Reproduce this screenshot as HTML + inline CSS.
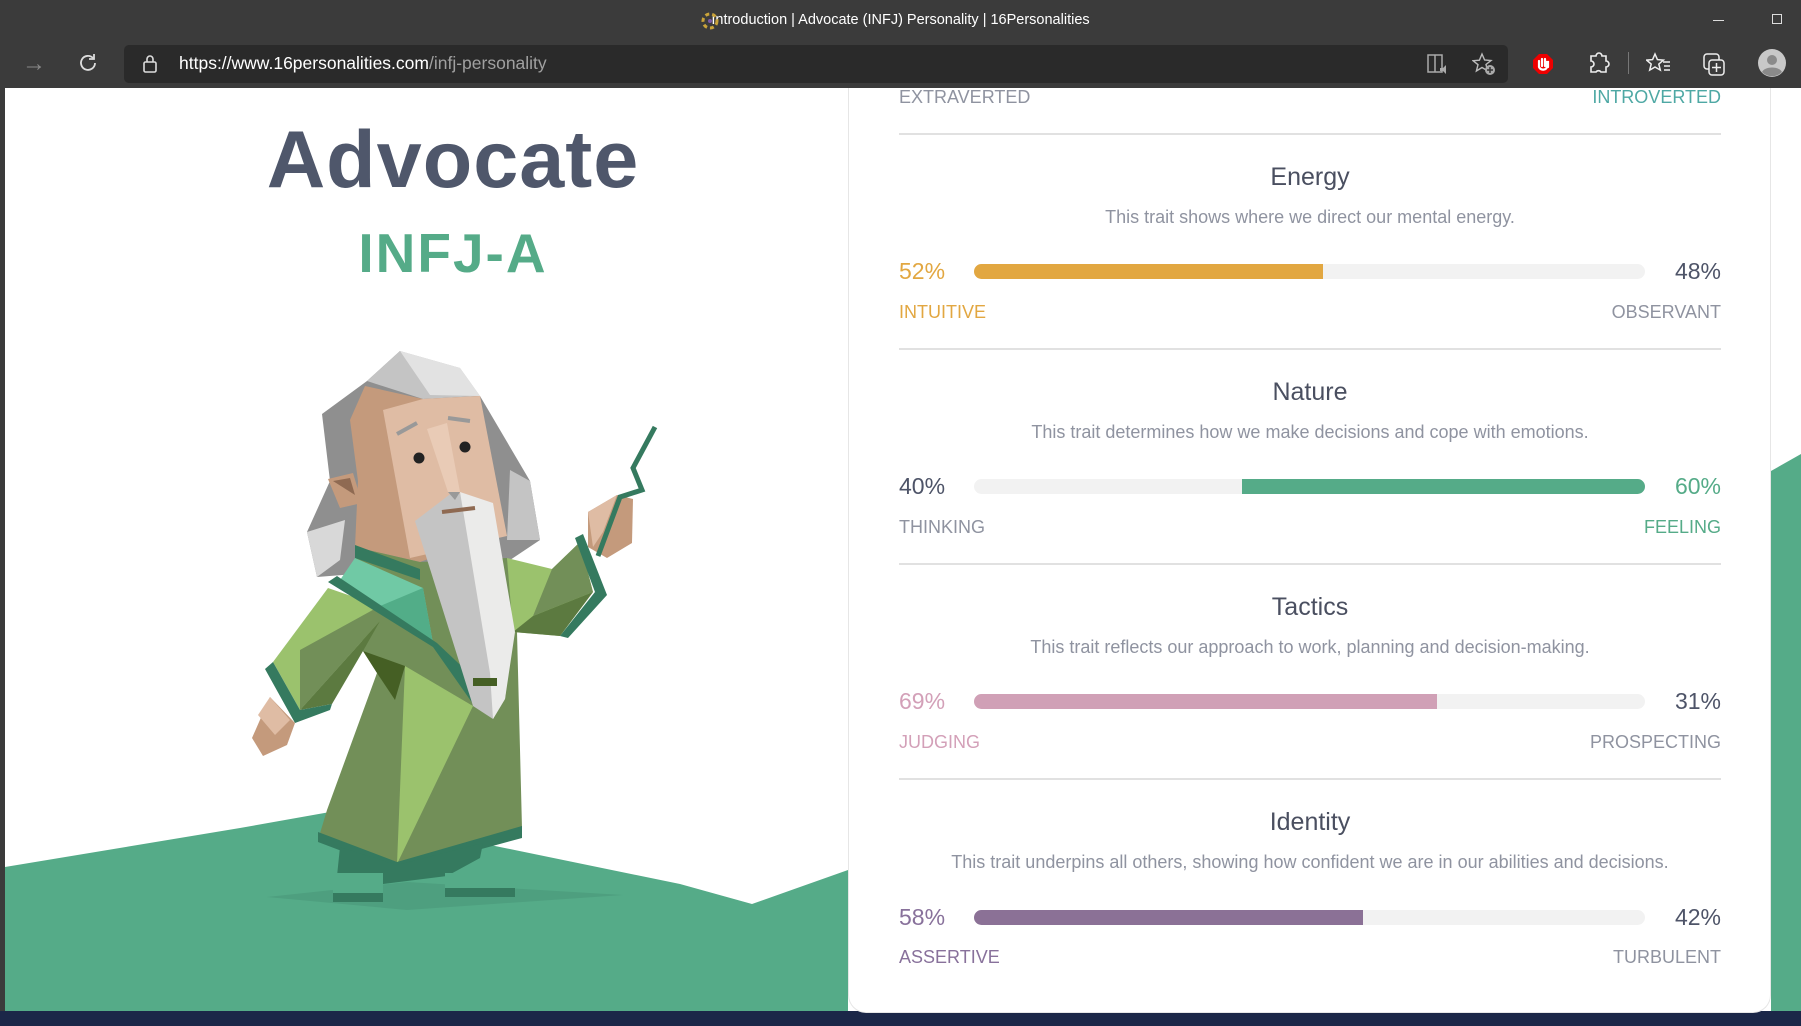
<!DOCTYPE html>
<html><head><meta charset="utf-8"><style>
*{margin:0;padding:0;box-sizing:border-box}
body{width:1801px;height:1026px;overflow:hidden;background:#fff;font-family:"Liberation Sans",sans-serif;position:relative}
.abs{position:absolute}
.t{position:absolute;white-space:nowrap;line-height:1}
.c{left:899px;width:822px;text-align:center}
.title{font-size:25px;color:#4a4f60}
.desc{font-size:18px;color:#8f93a0}
.pct{font-size:23px}
.lab{font-size:18px}
.bar{position:absolute;left:974px;width:671px;height:15px;border-radius:8px;background:#f2f2f2;overflow:hidden}
.div{position:absolute;left:899px;width:822px;height:2px;background:#e1e1e1}
</style></head><body>
<!-- page -->
<div class="abs" style="left:0;top:88px;width:5px;height:923px;background:#3b3b3b"></div>
<svg class="abs" style="left:0;top:0" width="1801" height="1026" viewBox="0 0 1801 1026">
<polygon points="5,867 240,828 330,812 680,884 752,904 848,870 848,1011 5,1011" fill="#55ab88"/>
<polygon points="1771,471 1801,454 1801,1011 1771,1011" fill="#55ab88"/>
<rect x="0" y="1011" width="1801" height="15" fill="#1b2748"/>
<polygon points="267,897 407,882 623,895 407,910" fill="#4e9f7f"/>
<polygon points="322,414 367,381 400,351 480,396 530,481 540,540 507,562 317,577 307,532 330,481" fill="#8f8f8f"/>
<polygon points="307,532 345,520 340,560 317,577" fill="#d8d8d8"/>
<polygon points="510,470 530,481 540,540 507,540" fill="#c4c4c4"/>
<polygon points="367,381 400,351 460,368 480,396 423,399" fill="#c4c4c4"/>
<polygon points="400,351 460,368 480,396 430,395" fill="#e2e2e2"/>
<polygon points="350,420 365,386 423,399 480,396 503,532 420,562 355,547 358,481" fill="#c49a7c"/>
<polygon points="383,410 423,399 480,396 507,536 410,558" fill="#dfbca4"/>
<polygon points="328,479 353,473 362,503 340,508" fill="#c49a7c"/>
<polygon points="333,481 350,478 355,495" fill="#8f6a52"/>
<polygon points="427,429 447,423 460,492 448,492" fill="#e9cbb6"/>
<line x1="397" y1="434" x2="417" y2="423" stroke="#999" stroke-width="4"/>
<line x1="448" y1="418" x2="470" y2="421" stroke="#999" stroke-width="4"/>
<circle cx="419" cy="458" r="5.5" fill="#222"/><circle cx="465" cy="447" r="5.5" fill="#222"/>
<polygon points="355,547 420,562 507,558 517,632 522,828 520,838 397,865 318,840 327,810 377,673 363,651" fill="#728f58"/>
<polygon points="405,666 473,706 397,864" fill="#9bc26d"/>
<polygon points="363,651 405,666 395,700 377,673" fill="#455f24"/>
<polygon points="318,832 397,862 522,826 522,838 397,872 318,842" fill="#357a5f"/>
<polygon points="340,847 397,865 483,843 480,858 447,876 383,884 337,876" fill="#357a5f"/>
<rect x="333" y="873" width="50" height="20" fill="#55ab88"/><rect x="333" y="893" width="50" height="9" fill="#357a5f"/>
<rect x="445" y="873" width="70" height="15" fill="#55ab88"/><rect x="445" y="888" width="70" height="9" fill="#357a5f"/>
<polygon points="328,588 380,606 380,621 300,710 273,662" fill="#9bc26d"/>
<polygon points="300,650 380,606 380,621 300,710" fill="#728f58"/>
<polygon points="380,621 363,651 332,704 300,710" fill="#5c7a40"/>
<polygon points="265,669 273,662 300,710 332,704 330,710 295,723" fill="#357a5f"/>
<polygon points="252,738 270,697 295,723 287,745 263,756" fill="#c49a7c"/>
<polygon points="258,715 270,697 290,720 275,735" fill="#dfbca4"/>
<polygon points="507,558 552,569 580,542 593,592 560,636 513,632" fill="#9bc26d"/>
<polygon points="533,616 593,592 560,636 513,632" fill="#5c7a40"/>
<polygon points="552,569 580,542 593,592 533,616" fill="#728f58"/>
<polygon points="575,538 583,534 607,595 568,638 560,636 595,592" fill="#357a5f"/>
<polygon points="588,512 617,495 633,499 632,543 607,558 588,547" fill="#c49a7c"/>
<polygon points="588,512 617,495 603,532 593,547" fill="#dfbca4"/>
<polyline points="598,556 620,497 642,490 633,468 655,427" fill="none" stroke="#357a5f" stroke-width="5"/>
<polygon points="355,545 420,569 420,580 355,558" fill="#357a5f"/>
<polygon points="340,580 355,558 423,588 433,643 380,606" fill="#70c9a5"/>
<polygon points="380,606 423,588 433,643" fill="#52ad88"/>
<polygon points="328,582 337,576 437,643 473,677 473,704 433,647" fill="#357a5f"/>
<polygon points="415,521 453,492 490,503 513,632 505,699 493,719 473,706" fill="#c4c4c4"/>
<polygon points="460,492 493,503 515,632 505,699 493,719 490,673" fill="#ebebea"/>
<polygon points="448,492 460,492 455,500" fill="#999"/>
<line x1="442" y1="512" x2="475" y2="508" stroke="#8f6a52" stroke-width="4"/>
<rect x="473" y="678" width="24" height="8" fill="#455f24"/>
</svg>
<div class="t" style="left:0;width:906px;text-align:center;top:120px;font-size:81px;color:#4f576b;font-weight:bold;letter-spacing:1px">Advocate</div>
<div class="t" style="left:0;width:906px;text-align:center;top:226px;font-size:55px;color:#55ab88;font-weight:bold;letter-spacing:2px">INFJ-A</div>

<!-- card -->
<div class="abs" style="left:848px;top:88px;width:923px;height:925px;background:#fff;border:1px solid #e6e6e6;border-top:none;border-radius:0 0 18px 18px"></div>
<div class="t lab" style="left:899px;top:88px;color:#8f93a0">EXTRAVERTED</div>
<div class="t lab" style="right:80px;top:88px;color:#4ea8a4">INTROVERTED</div>
<div class="div" style="top:133px"></div>

<div class="t c title" style="top:165px">Energy</div>
<div class="t c desc" style="top:208px">This trait shows where we direct our mental energy.</div>
<div class="t pct" style="left:899px;top:260px;color:#e2a741">52%</div>
<div class="t pct" style="right:80px;top:260px;color:#4e5468">48%</div>
<div class="bar" style="top:264px"><div style="width:52%;height:100%;background:#e2a741"></div></div>
<div class="t lab" style="left:899px;top:303px;color:#e2a741">INTUITIVE</div>
<div class="t lab" style="right:80px;top:303px;color:#8f93a0">OBSERVANT</div>
<div class="div" style="top:348px"></div>

<div class="t c title" style="top:380px">Nature</div>
<div class="t c desc" style="top:423px">This trait determines how we make decisions and cope with emotions.</div>
<div class="t pct" style="left:899px;top:475px;color:#4e5468">40%</div>
<div class="t pct" style="right:80px;top:475px;color:#55ab88">60%</div>
<div class="bar" style="top:479px"><div style="margin-left:40%;width:60%;height:100%;background:#55ab88"></div></div>
<div class="t lab" style="left:899px;top:518px;color:#8f93a0">THINKING</div>
<div class="t lab" style="right:80px;top:518px;color:#55ab88">FEELING</div>
<div class="div" style="top:563px"></div>

<div class="t c title" style="top:595px">Tactics</div>
<div class="t c desc" style="top:638px">This trait reflects our approach to work, planning and decision-making.</div>
<div class="t pct" style="left:899px;top:690px;color:#d3a0b8">69%</div>
<div class="t pct" style="right:80px;top:690px;color:#4e5468">31%</div>
<div class="bar" style="top:694px"><div style="width:69%;height:100%;background:#d0a0b6"></div></div>
<div class="t lab" style="left:899px;top:733px;color:#d3a0b8">JUDGING</div>
<div class="t lab" style="right:80px;top:733px;color:#8f93a0">PROSPECTING</div>
<div class="div" style="top:778px"></div>

<div class="t c title" style="top:810px">Identity</div>
<div class="t c desc" style="top:853px">This trait underpins all others, showing how confident we are in our abilities and decisions.</div>
<div class="t pct" style="left:899px;top:906px;color:#88719b">58%</div>
<div class="t pct" style="right:80px;top:906px;color:#4e5468">42%</div>
<div class="bar" style="top:910px"><div style="width:58%;height:100%;background:#8b7196"></div></div>
<div class="t lab" style="left:899px;top:948px;color:#88719b">ASSERTIVE</div>
<div class="t lab" style="right:80px;top:948px;color:#8f93a0">TURBULENT</div>

<!-- chrome -->
<div class="abs" style="left:0;top:0;width:1801px;height:88px;background:#3b3b3b"></div>
<div class="t" style="left:0;width:1801px;text-align:center;top:13px;font-size:14.5px;color:#fff">Introduction | Advocate (INFJ) Personality | 16Personalities</div>
<svg class="abs" style="left:701px;top:12px" width="18" height="18" viewBox="0 0 18 18"><circle cx="9" cy="9" r="7" fill="none" stroke="#c9a33a" stroke-width="3" stroke-dasharray="4 3"/><circle cx="9" cy="9" r="2" fill="#7d5aa6"/></svg>
<div class="abs" style="left:1713px;top:20px;width:11px;height:1px;background:#ddd"></div>
<div class="abs" style="left:1772px;top:14px;width:10px;height:10px;border:1px solid #ddd"></div>
<div class="t" style="left:22px;top:52px;font-size:24px;color:#888">→</div>
<svg class="abs" style="left:77px;top:52px" width="22" height="22" viewBox="0 0 22 22"><path d="M18 11a7 7 0 1 1-2-5" fill="none" stroke="#ddd" stroke-width="1.8"/><path d="M17 2v5h-5" fill="none" stroke="#ddd" stroke-width="1.8"/></svg>
<div class="abs" style="left:124px;top:45px;width:1384px;height:38px;background:#2a2a2a;border-radius:5px"></div>
<svg class="abs" style="left:142px;top:54px" width="16" height="20" viewBox="0 0 16 20"><rect x="2" y="8" width="12" height="10" rx="1.5" fill="none" stroke="#ddd" stroke-width="1.6"/><path d="M5 8V5a3 3 0 0 1 6 0v3" fill="none" stroke="#ddd" stroke-width="1.6"/></svg>
<div class="t" style="left:179px;top:55px;font-size:17.5px;color:#fff">https://www.16personalities.com<span style="color:#a0a0a0">/infj-personality</span></div>
<svg class="abs" style="left:1425px;top:52px" width="24" height="24" viewBox="0 0 24 24"><rect x="3" y="3" width="14" height="17" fill="none" stroke="#aaa" stroke-width="1.5"/><path d="M10 3v17" stroke="#aaa" stroke-width="1.5"/><path d="M15 16h3l3-3v9l-3-3h-3z" fill="#aaa"/></svg>
<svg class="abs" style="left:1472px;top:52px" width="24" height="24" viewBox="0 0 24 24"><path d="M10 2l2.6 6 6.4.5-5 4 1.6 6.3L10 15.5 4.4 19l1.6-6.3-5-4 6.4-.5z" fill="none" stroke="#bbb" stroke-width="1.4"/><circle cx="18" cy="18" r="5" fill="#aaa"/><path d="M18 15v6M15 18h6" stroke="#333" stroke-width="1.5"/></svg>
<svg class="abs" style="left:1532px;top:53px" width="22" height="22" viewBox="0 0 22 22"><path d="M7 1h8l6 6v8l-6 6H7l-6-6V7z" fill="#e00"/><path d="M7 14V8M10 13V6M13 13V6M16 14V9l-1 0v5c-1 3-6 4-8 0" fill="none" stroke="#fff" stroke-width="2.2" stroke-linecap="round"/></svg>
<svg class="abs" style="left:1587px;top:52px" width="24" height="24" viewBox="0 0 24 24"><path d="M9 4a3 3 0 0 1 6 0h4v5a3 3 0 0 1 0 6v5h-5a3 3 0 0 0-5 0H4v-5a3 3 0 0 0 0-6V4z" fill="none" stroke="#eee" stroke-width="1.6"/></svg>
<div class="abs" style="left:1628px;top:52px;width:1px;height:22px;background:#777"></div>
<svg class="abs" style="left:1646px;top:52px" width="26" height="24" viewBox="0 0 26 24"><path d="M9 2l2.4 5.6 6 .5-4.6 4 1.5 6L9 15 3.7 18.1l1.5-6-4.6-4 6-.5z" fill="none" stroke="#eee" stroke-width="1.5"/><path d="M17 10h7M18 14h6M18 18h6" stroke="#eee" stroke-width="1.5"/></svg>
<svg class="abs" style="left:1702px;top:52px" width="26" height="26" viewBox="0 0 26 26"><rect x="2" y="2" width="15" height="15" rx="3" fill="none" stroke="#eee" stroke-width="1.5"/><rect x="7" y="8" width="15" height="15" rx="3" fill="#3b3b3b" stroke="#eee" stroke-width="1.5"/><path d="M14.5 11v9M10 15.5h9" stroke="#eee" stroke-width="1.5"/></svg>
<svg class="abs" style="left:1758px;top:49px" width="28" height="28" viewBox="0 0 28 28"><circle cx="14" cy="14" r="14" fill="#c8c8c8"/><circle cx="14" cy="11" r="5" fill="#8a8a8a"/><path d="M4 23c3-6 17-6 20 0a14 14 0 0 1-20 0z" fill="#8a8a8a"/></svg>
</body></html>
